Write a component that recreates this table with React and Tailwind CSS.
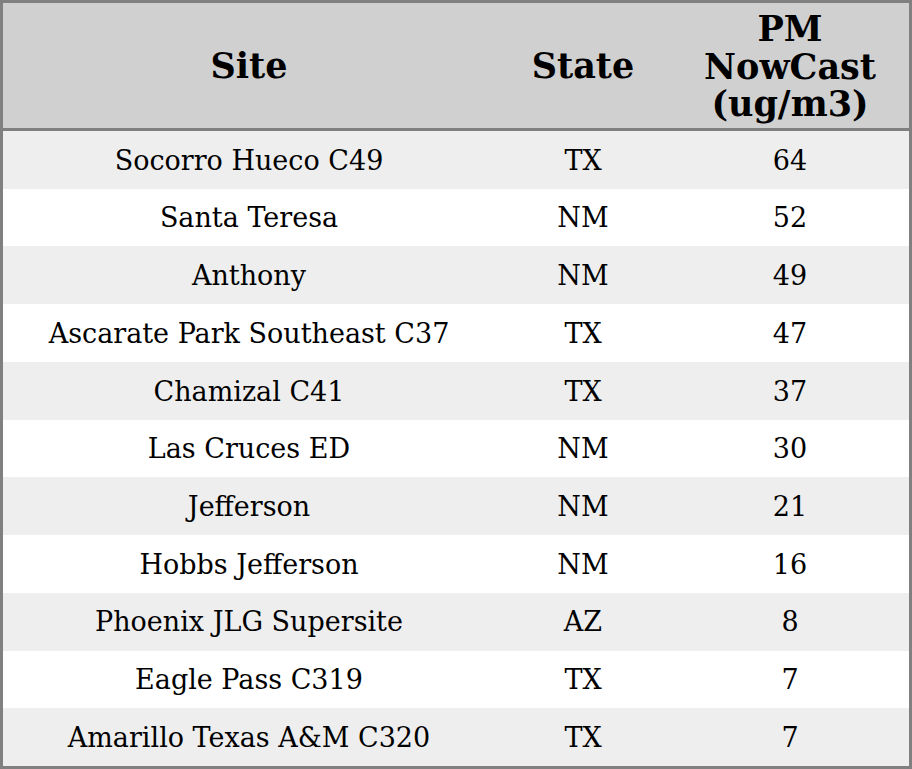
import React from "react";

const rows = [
  ["Socorro Hueco C49", "TX", "64"],
  ["Santa Teresa", "NM", "52"],
  ["Anthony", "NM", "49"],
  ["Ascarate Park Southeast C37", "TX", "47"],
  ["Chamizal C41", "TX", "37"],
  ["Las Cruces ED", "NM", "30"],
  ["Jefferson", "NM", "21"],
  ["Hobbs Jefferson", "NM", "16"],
  ["Phoenix JLG Supersite", "AZ", "8"],
  ["Eagle Pass C319", "TX", "7"],
  ["Amarillo Texas A&M C320", "TX", "7"],
];

export default function App() {
  return (
    <div className="w-[912px] h-[769px] bg-white font-['DejaVu_Serif',serif] text-black">
      <div className="border-[3px] border-[#808080] h-[769px] flex flex-col">
        {/* header */}
        <div className="grid grid-cols-[492px_176px_238px] h-[128px] bg-[#d0d0d0] border-b-[3px] border-[#808080] font-bold text-[35px] leading-[37.5px]">
          <div className="flex items-center justify-center">Site</div>
          <div className="flex items-center justify-center">State</div>
          <div className="flex items-center justify-center text-center pt-[2px]">
            PM
            <br />
            NowCast
            <br />
            (ug/m3)
          </div>
        </div>

        {/* rows */}
        <div className="flex-1 flex flex-col">
          {rows.map(([site, state, value], i) => (
            <div
              key={site}
              className={`flex-1 grid grid-cols-[492px_176px_238px] items-center pt-[2px] text-[27px] ${
                i % 2 === 0 ? "bg-[#eeeeee]" : "bg-white"
              }`}
            >
              <div className="text-center">{site}</div>
              <div className="text-center">{state}</div>
              <div className="text-center">{value}</div>
            </div>
          ))}
        </div>
      </div>
    </div>
  );
}
